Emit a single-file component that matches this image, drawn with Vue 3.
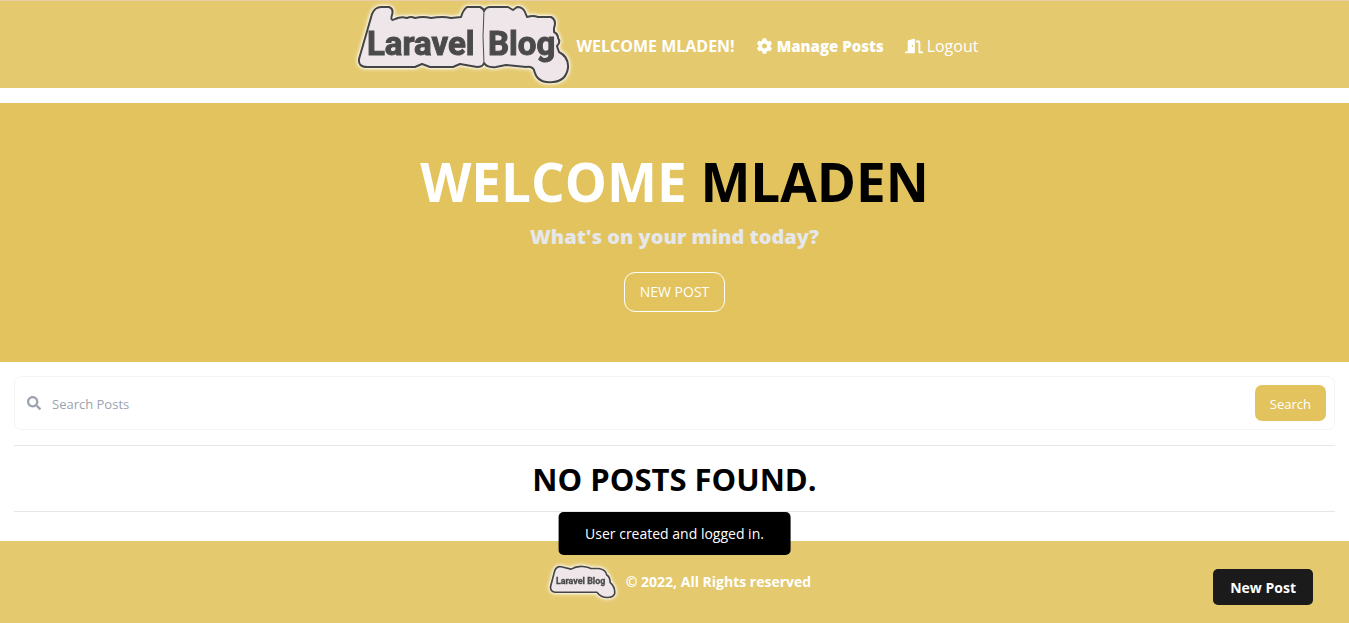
<script setup>
import { ref } from 'vue'

const user = 'MLADEN'
const query = ref('')

const plate =
  'M17 13 Q20 6 26 6 H34 Q39 8 37 14 Q35 21 40 18 Q46 15 52 17 Q56 15 60 17 Q68 15 76 17 Q88 15 96 17 L106 16 Q108 9 112 6 H125 Q129 8 129 10 Q131 6 135 6 H153 L158 9 L162 6 Q168 6 170 11 L172 16 Q178 14 183 16 H196 Q202 19 199 27 L199 31 Q203 33 203 37 Q206 41 202 45 L204 51 Q214 56 213 67 Q211 80 198 81 Q182 83 179 69 Q177 65 171 66 L151 64 L141 66 Q132 67 129 62 Q128 66 122 66 L105 63 L98 66 L75 66 L67 63 L60 66 H12 Q3 66 4 58 Z'
const smallPlate =
  'M26 30 Q32 14 46 17 L76 24 Q92 14 112 16 Q128 18 136 22 H160 Q182 26 184 42 Q194 48 194 64 Q210 78 208 98 Q204 110 186 110 Q166 110 154 94 H28 Q12 92 14 76 Z'
</script>

<template>
  <div class="page">
    <header class="topbar">
      <a href="#" class="brand" aria-label="Laravel Blog">
        <svg class="logo" viewBox="0 0 218 88">
          <path class="plate" :d="plate" />
          <path class="seam" d="M129 9 Q127 35 129 63" />
          <text class="word" x="12" y="54">Laravel</text>
          <text class="word" x="133" y="54">Blog</text>
        </svg>
      </a>
      <nav class="menu">
        <span class="greeting">WELCOME {{ user }}!</span>
        <a href="#" class="manage">
          <svg class="icon" viewBox="0 0 512 512"><path d="M487.400 315.700l-42.600-24.600c4.300-23.200 4.300-47 0-70.200l42.600-24.600c4.900-2.800 7.100-8.600 5.500-14-11.100-35.600-30-67.800-54.700-94.600-3.800-4.100-10-5.100-14.800-2.300L380.800 110c-17.900-15.400-38.500-27.300-60.800-35.100V25.800c0-5.600-3.900-10.500-9.400-11.700-36.700-8.200-74.300-7.800-109.200 0-5.500 1.200-9.400 6.100-9.400 11.700V75c-22.200 7.900-42.800 19.800-60.800 35.100L88.700 85.500c-4.900-2.800-11-1.900-14.800 2.300-24.700 26.700-43.600 58.900-54.700 94.600-1.700 5.400.6 11.200 5.500 14L67.300 221c-4.300 23.200-4.300 47 0 70.200l-42.600 24.600c-4.900 2.800-7.100 8.600-5.500 14 11.100 35.600 30 67.800 54.700 94.600 3.800 4.100 10 5.100 14.800 2.300l42.600-24.600c17.900 15.400 38.500 27.300 60.800 35.100v49.200c0 5.600 3.900 10.500 9.400 11.700 36.700 8.200 74.300 7.800 109.200 0 5.500-1.200 9.400-6.100 9.400-11.700v-49.200c22.200-7.900 42.800-19.800 60.800-35.100l42.600 24.600c4.900 2.800 11 1.900 14.800-2.300 24.700-26.700 43.600-58.900 54.700-94.600 1.500-5.500-.7-11.300-5.600-14.100zM256 336c-44.100 0-80-35.900-80-80s35.900-80 80-80 80 35.900 80 80-35.900 80-80 80z" /></svg>
          Manage Posts
        </a>
        <button type="button" class="logout">
          <svg class="icon door" viewBox="0 0 640 512"><path d="M624 448h-80V113.450C544 86.190 522.470 64 496 64H384v64h96v384h144c8.840 0 16-7.160 16-16v-32c0-8.840-7.160-16-16-16zM312.240 1.010l-192 49.740C105.990 54.440 96 67.700 96 82.920V448H16c-8.840 0-16 7.160-16 16v32c0 8.840 7.160 16 16 16h336V33.180c0-21.580-19.560-37.410-39.760-32.170zM264 288c-13.250 0-24-14.330-24-32s10.750-32 24-32 24 14.330 24 32-10.750 32-24 32z" /></svg>
          Logout
        </button>
      </nav>
    </header>

    <section class="hero">
      <h1>WELCOME <span>{{ user }}</span></h1>
      <p>What's on your mind today?</p>
      <a href="#" class="outline">NEW POST</a>
    </section>

    <main>
      <form class="search" role="search" @submit.prevent>
        <label for="query" aria-label="Search Posts">
          <svg class="lens" viewBox="0 0 512 512"><path d="M505 442.700L405.300 343c-4.500-4.500-10.600-7-17-7H372c27.600-35.300 44-79.700 44-128C416 93.100 322.900 0 208 0S0 93.100 0 208s93.100 208 208 208c48.300 0 92.700-16.400 128-44v16.300c0 6.400 2.500 12.500 7 17l99.700 99.700c9.400 9.400 24.600 9.400 33.900 0l28.300-28.300c9.400-9.400 9.400-24.600.1-34zM208 336c-70.700 0-128-57.200-128-128 0-70.700 57.200-128 128-128 70.700 0 128 57.200 128 128 0 70.700-57.200 128-128 128z" /></svg>
        </label>
        <input id="query" v-model="query" type="text" placeholder="Search Posts" />
        <button type="submit">Search</button>
      </form>
      <div class="results">
        <h2>NO POSTS FOUND.</h2>
      </div>
    </main>

    <footer>
      <a href="#" class="brand" aria-label="Laravel Blog">
        <svg class="logo small" viewBox="0 0 218 126">
          <path class="plate" :d="smallPlate" />
          <text class="word" x="30" y="70">Laravel Blog</text>
        </svg>
      </a>
      <p>© 2022, All Rights reserved</p>
      <a href="#" class="create">New Post</a>
    </footer>

    <div class="toast" role="status">User created and logged in.</div>
  </div>
</template>

<style>
body {
  background: #fff;
}
</style>

<style scoped>
.page {
  position: relative;
  min-height: 100vh;
  display: flex;
  flex-direction: column;
  font-family: "Open Sans", "Noto Sans", sans-serif;
  font-size: 14px;
  line-height: 20px;
  color: #000;
}
h1, h2, p {
  margin: 0;
}
a {
  color: inherit;
  text-decoration: none;
}
button {
  font: inherit;
  color: inherit;
  border: 0;
  padding: 0;
  background: none;
  cursor: pointer;
}
.topbar {
  box-sizing: border-box;
  height: 88px;
  display: flex;
  justify-content: center;
  align-items: center;
  gap: 4px;
  padding-right: 16px;
  border-top: 1px solid #e8cba8;
  background: #e4c96e;
  color: #fff;
}
.brand {
  display: flex;
}
.logo {
  width: 218px;
  height: 88px;
  overflow: visible;
  filter: drop-shadow(0 0 1px #fff) drop-shadow(0 0 2px #fff);
}
.logo.small {
  width: 72px;
  height: 42px;
}
.plate {
  fill: #efe6ea;
  stroke: #444;
  stroke-width: 2;
  stroke-linejoin: round;
}
.small .plate {
  stroke-width: 5;
}
.seam {
  fill: none;
  stroke: #4a4a4a;
  stroke-width: 1;
}
.word {
  font-family: Roboto, "Liberation Sans", sans-serif;
  font-size: 33px;
  font-weight: 700;
  fill: #4a4a4a;
  stroke: #4a4a4a;
  stroke-width: 1;
}
.small .word {
  font-size: 27px;
}
.menu {
  display: flex;
  align-items: center;
  gap: 21px;
  font-size: 16px;
  padding-top: 3px;
}
.greeting {
  font-weight: 700;
}
.manage,
.logout {
  display: flex;
  align-items: center;
  gap: 4px;
}
.manage {
  font-size: 15px;
  font-weight: 800;
}
.icon {
  width: 17px;
  height: 16px;
  fill: currentColor;
}
.door {
  width: 18px;
}
.hero {
  margin-top: 15px;
  padding-top: 2px;
  box-sizing: border-box;
  min-height: 259px;
  display: flex;
  flex-direction: column;
  align-items: center;
  justify-content: center;
  background: #e2c35d;
  color: #fff;
}
.hero h1 {
  font-size: 53px;
  line-height: 54px;
  font-weight: 700;
}
.hero h1 span {
  color: #000;
}
.hero p {
  margin: 14px 0 21px;
  font-size: 20px;
  line-height: 28px;
  font-weight: 800;
  color: #e5e7eb;
}
.outline {
  padding: 9px 15px;
  border: 1px solid #fff;
  border-radius: 11px;
}
main {
  padding: 14px 14px 29px;
}
.search {
  display: flex;
  align-items: center;
  padding: 8px 8px 8px 12px;
  border: 1px solid #f3f4f6;
  border-radius: 7px;
}
.search label {
  display: flex;
}
.lens {
  width: 14px;
  height: 14px;
  fill: #9ca3af;
}
.search input {
  flex: 1;
  min-width: 0;
  padding: 1px 11px 0;
  border: 0;
  outline: 0;
  font: inherit;
  font-size: 13px;
  line-height: 20px;
  background: none;
}
.search input::placeholder {
  color: #9ca3af;
  opacity: 1;
}
.search button {
  padding: 9px 15px 7px;
  border-radius: 7px;
  font-size: 13px;
  background: #e2c35d;
  color: #fff;
}
.results {
  margin-top: 15px;
  padding: 13px 0 12px;
  border: solid #e5e7eb;
  border-width: 1px 0;
  text-align: center;
}
.results h2 {
  font-size: 31px;
  line-height: 40px;
  font-weight: 700;
}
footer {
  position: relative;
  flex: 1;
  min-height: 82px;
  display: flex;
  justify-content: center;
  align-items: center;
  gap: 8px;
  padding-left: 8px;
  box-sizing: border-box;
  background: #e4c96e;
  color: #fff;
}
footer p {
  font-weight: 700;
}
.create {
  position: absolute;
  right: 36px;
  bottom: 18px;
  padding: 9px 17px 7px;
  border-radius: 5px;
  background: #1b1b1b;
  font-weight: 700;
}
.toast {
  position: fixed;
  bottom: 68px;
  left: 50%;
  transform: translateX(-50%);
  padding: 12px 27px 11px;
  border-radius: 5px;
  background: #000;
  color: #fff;
  white-space: nowrap;
}
</style>
